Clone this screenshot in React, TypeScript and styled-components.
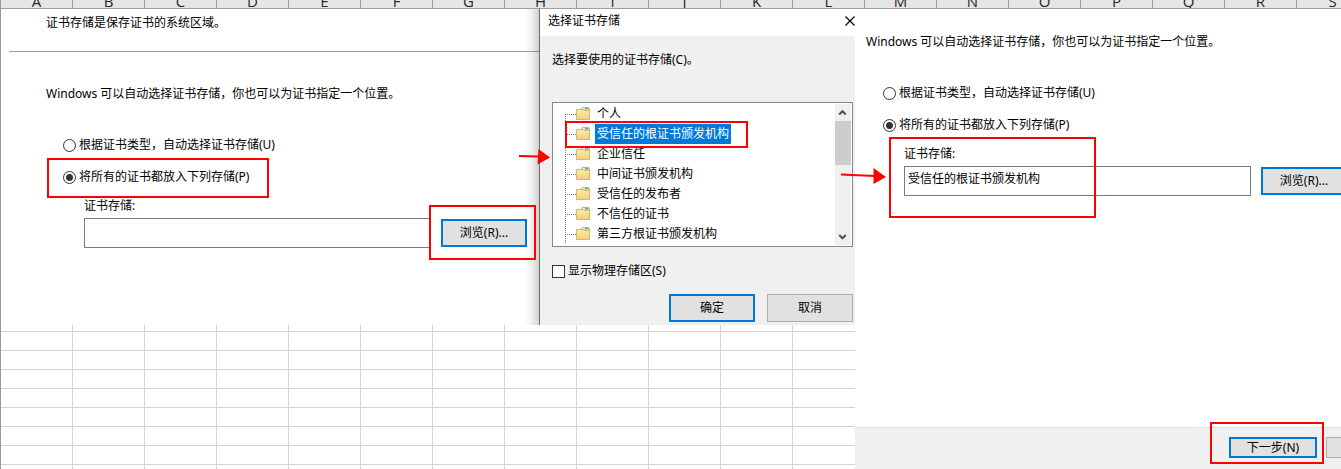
import React, { useState } from "react";
import styled, { createGlobalStyle, css } from "styled-components";

const GlobalStyle = createGlobalStyle`
  *, *::before, *::after { box-sizing: border-box; }
  body { margin: 0; background: #fff; }
  body, button, input {
    font-family: "Noto Sans", "Noto Sans CJK SC", sans-serif;
    font-size: 12px;
    line-height: 20px;
    color: #000;
  }
`;

const Page = styled.div`
  display: flex;
  flex-direction: column;
  min-height: 100vh;
  overflow: hidden;
`;

const ColumnHeaders = styled.div`
  display: flex;
  height: 9px;
  overflow: hidden;
  background: #e6e6e6;
  border-left: 1px solid #999;
  border-bottom: 1px solid #9f9f9f;
`;

const ColumnHeader = styled.div`
  display: flex;
  flex: 0 0 72px;
  align-items: flex-end;
  justify-content: center;
  border-right: 1px solid #9f9f9f;
  font-family: "Open Sans", sans-serif;
  font-size: 15px;
  line-height: 14px;
  color: #262626;
`;

const Main = styled.main`
  display: flex;
  flex: 1;
`;

const Workbook = styled.div`
  display: flex;
  flex: 1;
  flex-direction: column;
  border-left: 1px solid #999;
`;

const Windows = styled.div`
  display: flex;
`;

const Cells = styled.div`
  flex: 1;
  min-height: 144px;
  background-image:
    repeating-linear-gradient(to right, transparent 0 71px, #d4d4d4 71px 72px),
    repeating-linear-gradient(to bottom, #d4d4d4 0 1px, transparent 1px 19px);
  background-position: 0 0, 0 6px;
  background-size: auto, 100% 19px;
`;

const Wizard = styled.section`
  flex: 1;
  background: #fff;
`;

const WizardHeader = styled.header`
  height: 43px;
  margin-left: 8px;
  padding: 4px 0 0 37px;
  border-bottom: 1px solid #9f9f9f;
`;

const ResultWizard = styled.section`
  position: relative;
  display: flex;
  flex: 0 0 486px;
  flex-direction: column;
  min-width: 0;
  background: #fff;
`;

const Form = styled.form<{ $top: number; $left: number }>`
  display: flex;
  flex-direction: column;
  align-items: flex-start;
  padding: ${(p) => p.$top}px 0 0 ${(p) => p.$left}px;
  white-space: nowrap;
`;

const Intro = styled.p`
  margin: 0 0 31px;
`;

const Choices = styled.div`
  display: flex;
  flex-direction: column;
  align-items: flex-start;
  gap: 12px;
  padding-left: 17px;
`;

const Choice = styled.label`
  position: relative;
  display: flex;
  align-items: center;
  gap: 3px;
`;

const Radio = styled.input`
  appearance: none;
  width: 13px;
  height: 13px;
  margin: 0;
  border: 1px solid #333;
  border-radius: 50%;
  background: #fff;
  &:checked {
    background: radial-gradient(circle, #333 0 3px, #fff 4px);
  }
`;

const FieldRow = styled.div`
  display: flex;
  align-items: flex-end;
  gap: 10px;
  margin: 9px 0 0 38px;
`;

const Field = styled.div`
  position: relative;
  display: flex;
  flex-direction: column;
  gap: 2px;
`;

const TextBox = styled.input`
  width: 347px;
  height: 30px;
  margin: 0;
  padding: 0 3px 6px;
  border: 1px solid #7a7a7a;
  border-radius: 0;
  background: #fff;
  outline: none;
`;

const ButtonSlot = styled.div`
  position: relative;
  display: flex;
  margin-bottom: 1px;
`;

const Button = styled.button<{ $primary?: boolean; $compact?: boolean }>`
  flex: none;
  width: ${(p) => (p.$compact ? 88 : 86)}px;
  height: ${(p) => (p.$compact ? 21 : 28)}px;
  padding: 0;
  border: ${(p) => (p.$primary ? "2px solid #0078d7" : "1px solid #adadad")};
  border-radius: 0;
  background: #e1e1e1;
  line-height: 16px;
  white-space: nowrap;
`;

const Mark = styled.span<{ $inset: string; $width?: number }>`
  position: absolute;
  z-index: 2;
  inset: ${(p) => p.$inset};
  ${(p) => p.$width && css`width: ${p.$width}px;`}
  border: 2px solid #f00;
  pointer-events: none;
`;

const Arrow = styled.svg<{ $left: number; $top: number }>`
  position: absolute;
  z-index: 3;
  left: ${(p) => p.$left}px;
  top: ${(p) => p.$top}px;
  pointer-events: none;
`;

const Dialog = styled.section`
  position: relative;
  flex: 0 0 316px;
  border-left: 1px solid #6e6e6e;
  background: #f0f0f0;
  &::before {
    content: "";
    position: absolute;
    top: 0;
    bottom: 0;
    left: -16px;
    width: 15px;
    background: linear-gradient(to left, rgba(0, 0, 0, 0.18), rgba(0, 0, 0, 0.06) 50%, transparent);
  }
`;

const TitleBar = styled.header`
  display: flex;
  align-items: center;
  justify-content: space-between;
  padding: 2px 0 5px 8px;
  background: #fff;
`;

const CloseButton = styled.button`
  display: flex;
  padding: 0;
  border: 0;
  background: none;
`;

const DialogBody = styled.div`
  padding: 14px 2px 3px 12px;
`;

const Prompt = styled.p`
  margin: 0 0 32px;
`;

const StoreList = styled.div`
  display: flex;
  height: 145px;
  overflow: hidden;
  padding: 1px;
  border: 1px solid #828790;
  background: #fff;
`;

const Tree = styled.ul`
  flex: 1;
  margin: 0;
  padding: 0 0 0 11px;
  list-style: none;
`;

const TreeItem = styled.li`
  display: flex;
  align-items: center;
  height: 20px;
  &::before {
    content: "";
    align-self: stretch;
    width: 1px;
    background: repeating-linear-gradient(to bottom, #777 0 1px, transparent 1px 2px);
  }
  &:first-child::before {
    margin-top: 10px;
  }
  &::after {
    content: "";
    order: 1;
    width: 10px;
    height: 1px;
    background: repeating-linear-gradient(to right, transparent 0 1px, #777 1px 2px);
  }
  svg { order: 2; }
`;

const StoreName = styled.span<{ $selected: boolean }>`
  position: relative;
  order: 3;
  margin-left: 4px;
  padding: 0 2px;
  background: ${(p) => (p.$selected ? "#0078d7" : "transparent")};
  color: ${(p) => (p.$selected ? "#fff" : "#000")};
`;

const ScrollBar = styled.div`
  display: flex;
  flex-direction: column;
  align-items: center;
  width: 16px;
  background: #f0f0f0;
`;

const Thumb = styled.div`
  width: 100%;
  height: 44px;
  margin-bottom: auto;
  background: #cdcdcd;
`;

const CheckLabel = styled.label`
  display: flex;
  align-items: center;
  gap: 3px;
  margin-top: 14px;
`;

const CheckBox = styled.input`
  appearance: none;
  width: 13px;
  height: 13px;
  margin: 0;
  border: 1px solid #333;
  background: #fff;
  &:checked { box-shadow: inset 0 0 0 2px #fff; background: #333; }
`;

const Actions = styled.div`
  display: flex;
  justify-content: flex-end;
  gap: 12px;
  margin-top: 13px;
`;

const WizardFooter = styled.footer`
  display: flex;
  gap: 9px;
  margin-top: auto;
  padding: 9px 0 10px 374px;
  border-top: 1px solid #dfdfdf;
  background: #f0f0f0;
`;

const stores = [
  "个人",
  "受信任的根证书颁发机构",
  "企业信任",
  "中间证书颁发机构",
  "受信任的发布者",
  "不信任的证书",
  "第三方根证书颁发机构",
];

const Folder = () => (
  <svg width="15" height="14" viewBox="0 0 15 14" aria-hidden="true">
    <defs>
      <linearGradient id="folderFace" x1="0" y1="0" x2="0" y2="1">
        <stop offset="0" stopColor="#ffeaa8" />
        <stop offset="1" stopColor="#f0d080" />
      </linearGradient>
    </defs>
    <path d="M5.5 3.5V1.5L6.5 .5H12.5L13.5 1.5V12.5H5.5Z" fill="#e8cd83" stroke="#d0ae60" />
    <path d="M7 1H12V2H7Z" fill="#fff" />
    <path d="M9 1H12V2H9Z" fill="#4d9de0" />
    <path d="M.5 2.5H7L8 3.5H13.5V12.5H.5Z" fill="url(#folderFace)" stroke="#d9b866" />
  </svg>
);

const Chevron = ({ down }: { down?: boolean }) => (
  <svg width="16" height="17" viewBox="0 0 16 17" aria-hidden="true">
    <path
      d={down ? "M4.2 7L7.5 10.3L10.8 7" : "M4.2 10.5L7.5 7.2L10.8 10.5"}
      fill="none"
      stroke="#505050"
      strokeWidth="2"
    />
  </svg>
);

interface StoreFormProps {
  id: string;
  top: number;
  left: number;
  initialStore: string;
  highlight: "choice" | "field";
}

function StoreForm({ id, top, left, initialStore, highlight }: StoreFormProps) {
  const [store, setStore] = useState(initialStore);
  const marksChoice = highlight === "choice";
  return (
    <Form $top={top} $left={left}>
      <Intro>Windows 可以自动选择证书存储，你也可以为证书指定一个位置。</Intro>
      <Choices>
        <Choice>
          <Radio type="radio" name={`${id}-mode`} />
          根据证书类型，自动选择证书存储(U)
        </Choice>
        <Choice>
          <Radio type="radio" name={`${id}-mode`} defaultChecked />
          将所有的证书都放入下列存储(P)
          {marksChoice && <Mark $inset="-9px -20px -11px -16px" />}
        </Choice>
      </Choices>
      <FieldRow>
        <Field>
          <label htmlFor={`${id}-store`}>证书存储:</label>
          <TextBox id={`${id}-store`} value={store} onChange={(e) => setStore(e.target.value)} />
          {!marksChoice && <Mark $inset="-7px auto -22px -15px" $width={207} />}
        </Field>
        <ButtonSlot>
          <Button type="button" $primary>浏览(R)...</Button>
          {marksChoice && <Mark $inset="-14px -9px -13px -12px" />}
        </ButtonSlot>
      </FieldRow>
    </Form>
  );
}

export default function App() {
  return (
    <Page>
      <GlobalStyle />
      <ColumnHeaders>
        {"ABCDEFGHIJKLMNOPQRS".split("").map((letter) => (
          <ColumnHeader key={letter}>{letter}</ColumnHeader>
        ))}
      </ColumnHeaders>
      <Main>
        <Workbook>
          <Windows>
            <Wizard>
              <WizardHeader>证书存储是保存证书的系统区域。</WizardHeader>
              <StoreForm id="import" top={32} left={45} initialStore="" highlight="choice" />
            </Wizard>
            <Dialog role="dialog" aria-labelledby="dialog-title">
              <TitleBar>
                <span id="dialog-title">选择证书存储</span>
                <CloseButton type="button" aria-label="关闭">
                  <svg width="10" height="11" viewBox="0 0 10 11" aria-hidden="true">
                    <path d="M.5 .5L9.5 9.5M9.5 .5L.5 9.5" stroke="#000" strokeWidth="1.2" />
                  </svg>
                </CloseButton>
              </TitleBar>
              <DialogBody>
                <Prompt>选择要使用的证书存储(C)。</Prompt>
                <StoreList>
                  <Tree role="tree" aria-label="证书存储">
                    {stores.map((name, i) => (
                      <TreeItem key={name} role="treeitem" aria-selected={i === 1}>
                        <Folder />
                        <StoreName $selected={i === 1}>
                          {name}
                          {i === 1 && <Mark $inset="-3px -17px -4px -30px" />}
                        </StoreName>
                      </TreeItem>
                    ))}
                  </Tree>
                  <ScrollBar>
                    <Chevron />
                    <Thumb />
                    <Chevron down />
                  </ScrollBar>
                </StoreList>
                <CheckLabel>
                  <CheckBox type="checkbox" />
                  显示物理存储区(S)
                </CheckLabel>
                <Actions>
                  <Button type="button" $primary>确定</Button>
                  <Button type="button">取消</Button>
                </Actions>
              </DialogBody>
              <Arrow $left={-21} $top={139} width="32" height="18" viewBox="0 0 32 18" aria-hidden="true">
                <path d="M0 8L20 8.6" stroke="#f00" strokeWidth="2" />
                <path d="M19.5 1L31 9.5L18.5 16.5Z" fill="#f00" />
              </Arrow>
            </Dialog>
          </Windows>
          <Cells />
        </Workbook>
        <ResultWizard>
          <StoreForm
            id="result"
            top={23}
            left={11}
            initialStore="受信任的根证书颁发机构"
            highlight="field"
          />
          <Arrow $left={-14} $top={159} width="46" height="18" viewBox="0 0 46 18" aria-hidden="true">
            <path d="M0 6.6L34 8" stroke="#f00" strokeWidth="2" />
            <path d="M32.5 0L45 9L32.5 16Z" fill="#f00" />
          </Arrow>
          <WizardFooter>
            <ButtonSlot>
              <Button type="button" $primary $compact>下一步(N)</Button>
              <Mark $inset="-15px -7px -6px -19px" />
            </ButtonSlot>
            <Button type="button" $compact aria-label="取消" />
          </WizardFooter>
        </ResultWizard>
      </Main>
    </Page>
  );
}
